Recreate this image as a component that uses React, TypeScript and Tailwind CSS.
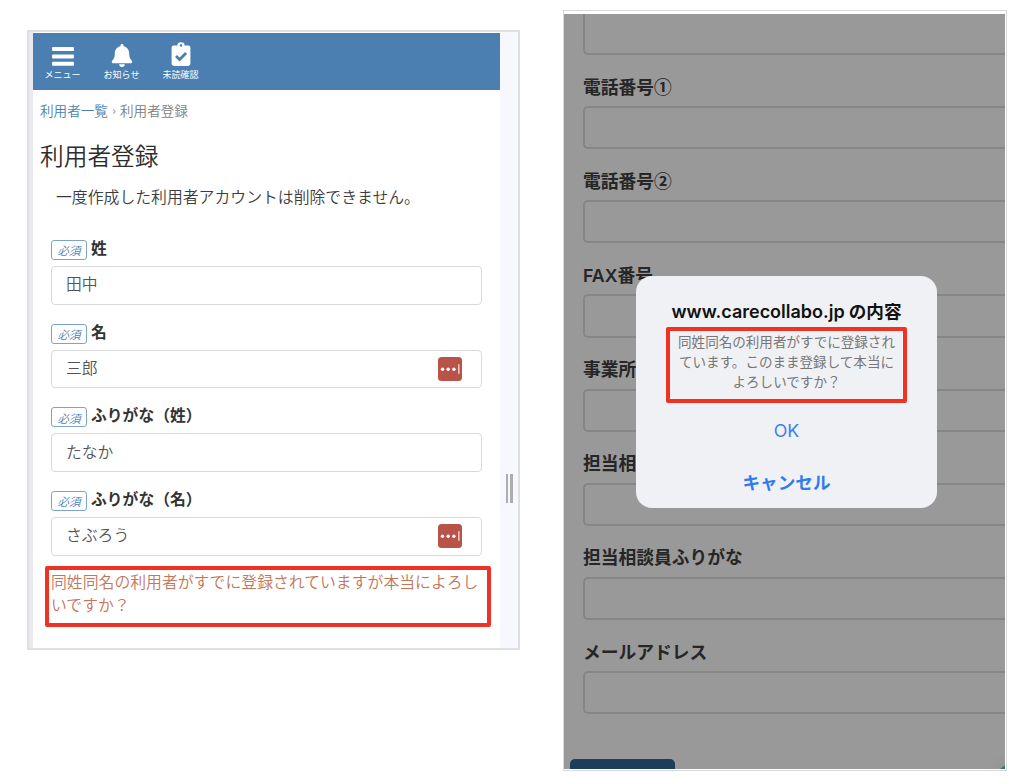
import type { ReactNode } from "react";

type Field = { label: string; value: string; manager?: boolean };

const fields: Field[] = [
  { label: "姓", value: "田中" },
  { label: "名", value: "三郎", manager: true },
  { label: "ふりがな（姓）", value: "たなか" },
  { label: "ふりがな（名）", value: "さぶろう", manager: true },
];

const contactLabels = [
  "電話番号①",
  "電話番号②",
  "FAX番号",
  "事業所",
  "担当相談員",
  "担当相談員ふりがな",
  "メールアドレス",
];

function NavItem({ label, children }: { label: string; children: ReactNode }) {
  return (
    <a className="flex w-[59px] flex-col items-center text-white">
      <span className="block h-[28px]">{children}</span>
      <span className="text-[9px] leading-[12px] whitespace-nowrap">{label}</span>
    </a>
  );
}

function Header() {
  return (
    <header className="flex h-[57px] bg-[#4b7fb1] pt-[8px]">
      <NavItem label="メニュー">
        <svg width="24" height="28" viewBox="0 0 24 28" fill="currentColor">
          <rect x="1" y="6" width="22" height="4" rx="1" />
          <rect x="1" y="13.4" width="22" height="4" rx="1" />
          <rect x="1" y="20.8" width="22" height="4" rx="1" />
        </svg>
      </NavItem>
      <NavItem label="お知らせ">
        <svg width="24" height="28" viewBox="0 0 24 28" fill="currentColor">
          <path d="M12 3c.9 0 1.5.6 1.5 1.5v.7c3.4.7 5.7 3.4 5.7 7.1 0 4.6 1.2 5.9 2.5 7.3.4.4.5.8.5 1.2 0 .8-.6 1.5-1.5 1.5H3.3c-.9 0-1.5-.7-1.5-1.5 0-.4.1-.8.5-1.200 1.300-1.400 2.500-2.700 2.500-7.300 0-3.700 2.300-6.400 5.700-7.100v-.7c0-.9.6-1.500 1.500-1.500zM9.200 23.300h5.600a2.800 2.600 0 0 1-5.600 0z" />
        </svg>
      </NavItem>
      <NavItem label="未読確認">
        <svg width="24" height="28" viewBox="0 0 24 28">
          <path
            fill="currentColor"
            d="M4.900 4.500h3.500a3.600 3.300 0 0 1 7.200 0h3.500c1.300 0 2.300.9 2.300 2.300v15.800c0 1.300-1 2.300-2.300 2.300H4.900c-1.300 0-2.300-1-2.300-2.300V6.800c0-1.400 1-2.300 2.300-2.300z"
          />
          <circle cx="12" cy="4.500" r="1.200" fill="#4b7fb1" />
          <path d="M7 15l3.600 3.500 6.500-6.600" fill="none" stroke="#4b7fb1" strokeWidth="2.800" />
        </svg>
      </NavItem>
    </header>
  );
}

function PasswordManagerIcon() {
  return (
    <svg width="24" height="24" viewBox="0 0 24 24">
      <rect width="24" height="24" rx="3.500" fill="#b95347" />
      <circle cx="4.500" cy="12.200" r="1.700" fill="#fff" />
      <circle cx="10.200" cy="12.200" r="1.700" fill="#fff" />
      <circle cx="15.900" cy="12.200" r="1.700" fill="#fff" />
      <rect x="20.200" y="7.200" width="1.300" height="9.600" fill="#f6dedb" />
    </svg>
  );
}

function FormField({ label, value, manager }: Field) {
  return (
    <div className="mb-[19.200px]">
      <div className="flex h-[26px] items-start">
        <span className="flex h-[20px] w-[36px] items-center justify-center rounded-[3px] border border-[#7ba3cd] pt-[2px] text-[11.500px] leading-none font-[350] text-[#4b7fb1] italic">
          必須
        </span>
        <span className="ml-[4px] text-[15.800px] leading-[16px] font-bold text-[#333]">{label}</span>
      </div>
      <div className="flex h-[38.500px] items-center justify-between rounded-[4px] border border-[#d9d9d9] pr-[19px] pl-[14px] text-[15.800px] leading-none font-[350] text-[#555]">
        <span className="-mt-[2px]">{value}</span>
        {manager && <PasswordManagerIcon />}
      </div>
    </div>
  );
}

function RegisterPanel() {
  return (
    <section className="mt-[30px] flex h-[620px] w-[493px] border-2 border-[#dedfe1] bg-white">
      <div className="w-[4px] bg-[#e9e9ef]" />
      <div className="w-[467px] pt-px">
        <Header />
        <div className="pl-[7px]">
          <nav className="mt-[9px] flex h-[22px] items-center text-[13.600px] font-[350] text-[#808080]">
            <span className="text-[#4b7fb1]">利用者一覧</span>
            <span className="w-[12px] text-center text-[12px]">›</span>
            <span>利用者登録</span>
          </nav>
          <h1 className="mt-[18px] text-[23.700px] leading-[32px] font-[350] text-[#2c2c2c]">利用者登録</h1>
          <p className="mt-[14px] pl-[16px] text-[15.850px] leading-[24px] font-[350] text-[#3c3c3c]">
            一度作成した利用者アカウントは削除できません。
          </p>
        </div>
        <form className="mt-[31px] pr-[18px] pl-[18px]">
          {fields.map((f) => (
            <FormField key={f.label} {...f} />
          ))}
        </form>
        <p className="-mt-[8.500px] ml-[12px] h-[61px] w-[446px] rounded-[2px] border-4 border-[#ee3224] pl-[2px] text-[15.850px] leading-[23px] font-[350] whitespace-nowrap text-[#c4765a]">
          同姓同名の利用者がすでに登録されていますが本当によろし
          <br />
          いですか？
        </p>
      </div>
      <div className="flex flex-1 justify-center gap-[2px] bg-[#f7f8fd] pt-[442px]">
        <span className="h-[29px] w-[2.500px] bg-[#adadad]" />
        <span className="h-[29px] w-[2.500px] bg-[#adadad]" />
      </div>
    </section>
  );
}

function ConfirmDialog() {
  return (
    <div className="absolute top-[262px] left-[72px] flex h-[232px] w-[301px] flex-col items-center rounded-[16px] bg-[#f0f1f4]">
      <h2 className="mt-[23px] text-[17.600px] leading-[24px] font-semibold whitespace-nowrap text-[#111]">
        <span className="font-['Inter'] text-[18px]">www.carecollabo.jp</span> の内容
      </h2>
      <p className="mt-[2.500px] h-[76px] w-[241px] rounded-[2px] border-4 border-[#ee3224] text-center text-[13.550px] leading-[20px] whitespace-nowrap text-[#777]">
        同姓同名の利用者がすでに登録され
        <br />
        ています。このまま登録して本当に
        <br />
        よろしいですか？
      </p>
      <button className="mt-[16.500px] font-['Inter'] text-[17.800px] leading-[24px] text-[#3a7ff0]">OK</button>
      <button className="mt-[27px] text-[17.600px] leading-[24px] font-bold text-[#2f7bf0]">
        キャンセル
      </button>
    </div>
  );
}

function ContactPanel() {
  return (
    <section className="mt-[10px] h-[761px] w-[444px] border border-[#d8d8d8] bg-white pt-[3px] pr-px pb-px">
      <div className="relative h-full overflow-hidden bg-[#999]">
        <div className="pl-[19px]">
          <div className="h-[41px] rounded-bl-[5px] border-b-2 border-l-2 border-[#868686]" />
          {contactLabels.map((label) => (
            <div key={label} className="h-[94.200px] pt-[18.500px]">
              <div className="h-[32.500px] text-[17.750px] leading-[25px] font-semibold text-[#262626]">
                {label.startsWith("FAX") ? (
                  <>
                    <span className="font-['Inter']">FAX</span>
                    {label.slice(3)}
                  </>
                ) : (
                  label
                )}
              </div>
              <div className="h-[43.200px] rounded-l-[5px] border-y-2 border-l-2 border-[#868686]" />
            </div>
          ))}
        </div>
        <div className="mt-[44.500px] ml-[6px] h-[40px] w-[105px] rounded-[5px] bg-[#1b3f59]" />
        <ConfirmDialog />
        <div className="absolute -right-[8px] -bottom-[9px] h-[12px] w-[13px] rounded-full bg-[#2b7285] shadow-[0_0_14px_rgba(0,0,0,0.15)]" />
      </div>
    </section>
  );
}

export default function App() {
  return (
    <main className="flex h-[780px] w-[1024px] items-start gap-[43px] overflow-hidden bg-white pl-[27px] font-['Noto_Sans_CJK_JP',sans-serif]">
      <RegisterPanel />
      <ContactPanel />
    </main>
  );
}
